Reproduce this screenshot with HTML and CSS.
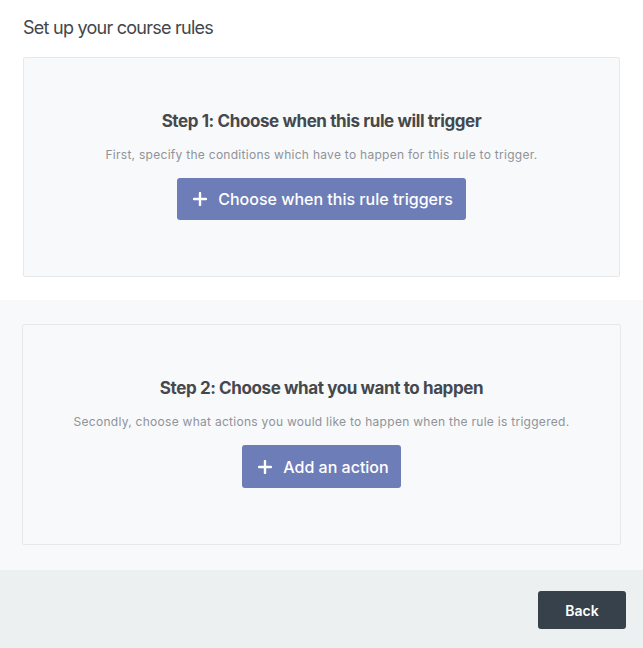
FILE: index.html
```html
<!DOCTYPE html>
<html lang="en">
<head>
    <meta charset="UTF-8">
    <meta name="viewport" content="width=device-width, initial-scale=1.0">
    <title>Course Rules</title>
    <link rel="stylesheet" href="styles.css">
</head>
<body>

    <div class="section section-top">
        <h1 class="page-title">Set up your course rules</h1>
        <div class="step-card">
            <h2>Step 1: Choose when this rule will trigger</h2>
            <p class="step-text">First, specify the conditions which have to happen for this rule to trigger.</p>
            <button type="button" class="step-button">
                <svg class="plus" width="14" height="14" viewBox="0 0 14 14"><path d="M7 1v12M1 7h12" stroke="#fff" stroke-width="2.4" stroke-linecap="round"/></svg>
                Choose when this rule triggers
            </button>
        </div>
    </div>

    <div class="section section-actions">
        <div class="step-card">
            <h2>Step 2: Choose what you want to happen</h2>
            <p class="step-text">Secondly, choose what actions you would like to happen when the rule is triggered.</p>
            <button type="button" class="step-button action-button">
                <svg class="plus" width="14" height="14" viewBox="0 0 14 14"><path d="M7 1v12M1 7h12" stroke="#fff" stroke-width="2.4" stroke-linecap="round"/></svg>
                Add an action
            </button>
        </div>
    </div>

    <div class="footer">
        <button type="button" class="back-button">Back</button>
    </div>

</body>
</html>
```

FILE: styles.css
```css
body {
    font-family: Inter, "Noto Sans", sans-serif;
    background-color: #fff;
    margin: 0;
    padding: 0;
    color: #3f4247;
}

.section-top {
    padding: 16px 23px 23px;
}

.page-title {
    margin: 0 0 17px;
    font-size: 18px;
    line-height: 24px;
    font-weight: 400;
    letter-spacing: -0.75px;
    color: #43464b;
}

.section-actions {
    background-color: #f8f9fa;
    padding: 24px 22px 25px;
}

.step-card {
    background-color: #f8f9fa;
    border: 1px solid #e6e8ea;
    border-radius: 2px;
    height: 220px;
    box-sizing: border-box;
    padding-top: 51px;
    display: flex;
    flex-direction: column;
    align-items: center;
    text-align: center;
}

.section-actions .step-card {
    height: 221px;
}

.step-card h2 {
    margin: 0;
    font-size: 17px;
    line-height: 24px;
    font-weight: 700;
    letter-spacing: -0.4px;
    color: #45484d;
}

.step-text {
    margin: 13px 0 0;
    font-size: 12px;
    line-height: 18px;
    letter-spacing: 0.28px;
    color: #8f939a;
}

.step-button {
    margin-top: 14px;
    height: 42px;
    padding: 0 13px 0 16px;
    display: flex;
    align-items: center;
    gap: 11px;
    background-color: #6d7db8;
    color: #fff;
    border: none;
    border-radius: 3px;
    font-family: inherit;
    font-size: 16px;
    font-weight: 500;
    cursor: pointer;
}

.action-button {
    height: 43px;
    padding-right: 12px;
}

.footer {
    background-color: #edf0f0;
    height: 78px;
    box-sizing: border-box;
    padding: 21px 17px 0;
    display: flex;
    justify-content: flex-end;
    align-items: flex-start;
}

.back-button {
    width: 88px;
    height: 38px;
    background-color: #37414b;
    color: #fff;
    border: none;
    border-radius: 3px;
    font-family: inherit;
    font-size: 14px;
    font-weight: 600;
    cursor: pointer;
}
```
